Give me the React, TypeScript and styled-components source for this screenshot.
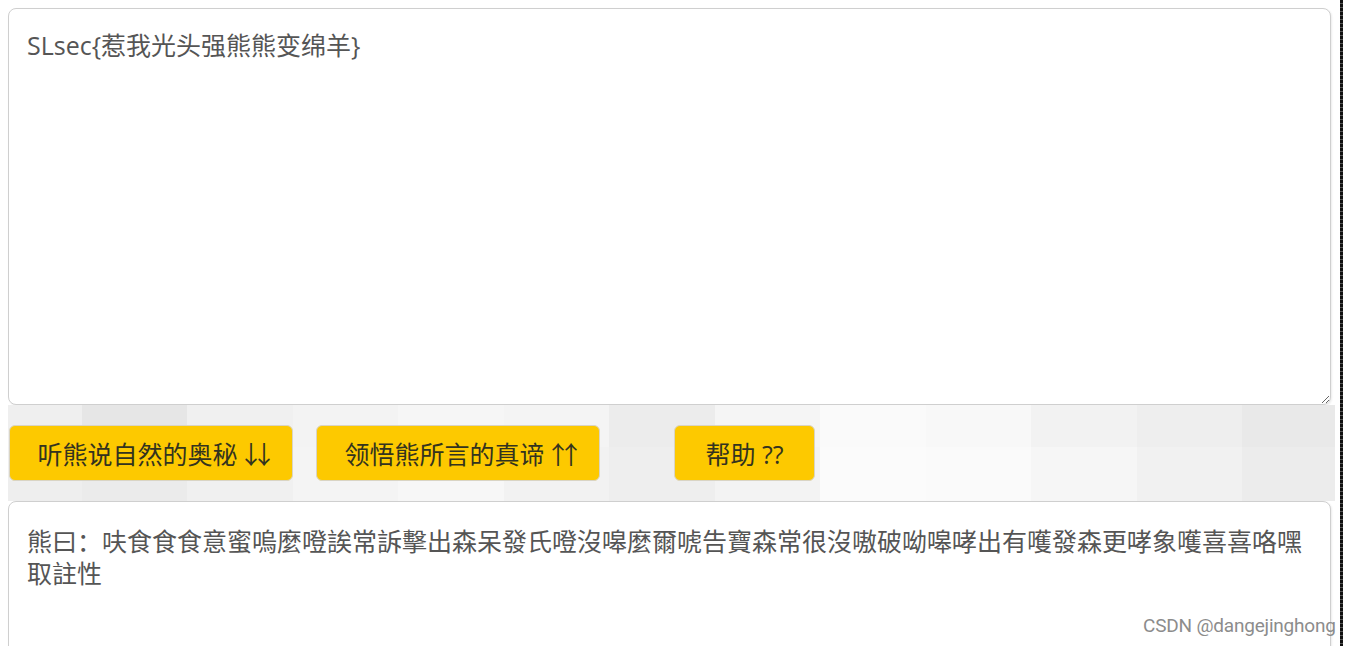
import styled, { createGlobalStyle } from "styled-components";

const GlobalStyle = createGlobalStyle`
  html, body {
    margin: 0;
    padding: 0;
    background: #fff;
    overflow: hidden;
  }
`

// tile columns of the page background behind the buttons (x relative to the bar)
const EDGES = [0, 74, 179, 285, 390, 496, 601, 707, 812, 918, 1023, 1129, 1234, 1330]
const TOP_ROW = ['#efefef', '#e6e6e6', '#f0f0f0', '#f3f3f3', '#f6f6f6', '#f4f4f4', '#ececec', '#f5f5f5', '#fafafa', '#f8f8f8', '#f2f2f2', '#eeeeee', '#e9e9e9']
const BOTTOM_ROW = ['#eeeeee', '#ebebeb', '#f0f0f0', '#f4f4f4', '#f7f7f7', '#f2f2f2', '#eeeeee', '#f3f3f3', '#fbfbfb', '#fafafa', '#f6f6f6', '#f1f1f1', '#ececec']

const tiles = (colors: string[]) =>
  `linear-gradient(to right, ${colors.map((c, i) => `${c} ${EDGES[i]}px ${EDGES[i + 1]}px`).join(", ")})`

const FONT = `"Open Sans", "Noto Sans CJK SC", sans-serif`

export default function App() {
  return (
    <>
      <GlobalStyle />
      <Page>
        <Main>
          <TextBox
            $height={397}
            $padTop={20}
            readOnly
            defaultValue="SLsec{惹我光头强熊熊变绵羊}"
          />
          <ButtonBar>
            <Button $width={284} $gap={0}>听熊说自然的奥秘<Arrows>↓↓</Arrows></Button>
            <Button $width={284} $gap={23}>领悟熊所言的真谛<Arrows>↑↑</Arrows></Button>
            <Button $width={141} $gap={74}>帮助 ??</Button>
          </ButtonBar>
          <TextBox
            $height={220}
            $padTop={23}
            readOnly
            defaultValue="熊曰：呋食食食意蜜嗚麼噔誒常訴擊出森呆發氏噔沒嗥麼爾唬告寶森常很沒嗷破呦嗥哮出有嚄發森更哮象嚄喜喜咯嘿取註性"
          />
        </Main>
        <Edge />
        <Watermark>CSDN @dangejinghong</Watermark>
      </Page>
    </>
  )
}

const Page = styled.div`
  position: relative;
  display: flex;
  height: 646px;
  overflow: hidden;
`
const Main = styled.div`
  display: flex;
  flex-direction: column;
  width: 1327px;
  padding: 8px 0 0 8px;
`
const TextBox = styled.textarea<{ $height: number; $padTop: number }>`
  box-sizing: border-box;
  flex: none;
  width: 1323px;
  height: ${p => p.$height}px;
  margin: 0;
  padding: ${p => p.$padTop}px 18px 0 18px;
  border: 1px solid #cfcfcf;
  border-radius: 8px;
  box-shadow: 1px 1px 2px rgba(0, 0, 0, 0.08);
  background: #fff;
  color: #555;
  font-family: ${FONT};
  font-size: 25px;
  line-height: 32px;
  outline: none;
  resize: vertical;
`
const ButtonBar = styled.div`
  flex: none;
  display: flex;
  align-items: flex-start;
  height: 96px;
  padding: 20px 0 0 1px;
  box-sizing: border-box;
  background:
    ${tiles(TOP_ROW)} 0 0 / 100% 42px no-repeat,
    ${tiles(BOTTOM_ROW)} 0 42px / 100% 100% no-repeat;
`
const Button = styled.button<{ $width: number; $gap: number }>`
  box-sizing: border-box;
  width: ${p => p.$width}px;
  height: 56px;
  margin-left: ${p => p.$gap}px;
  padding: 0;
  border: 1px solid #d9d4c4;
  border-radius: 6px;
  background: #fdc900;
  color: #33331f;
  font-family: ${FONT};
  font-size: 25px;
  cursor: pointer;
`
const Arrows = styled.span`
  font-family: "Noto Sans CJK SC", sans-serif;
  letter-spacing: -12px;
  margin-left: 1px;
`
const Edge = styled.div`
  width: 3px;
  margin-left: 5px;
  background: repeating-linear-gradient(to bottom, #111 0 3px, #555 3px 4px);
`
const Watermark = styled.span`
  position: absolute;
  left: 1143px;
  top: 614px;
  color: #8c8c8c;
  font-family: Roboto, "Liberation Sans", sans-serif;
  font-size: 19px;
  letter-spacing: -0.2px;
`
